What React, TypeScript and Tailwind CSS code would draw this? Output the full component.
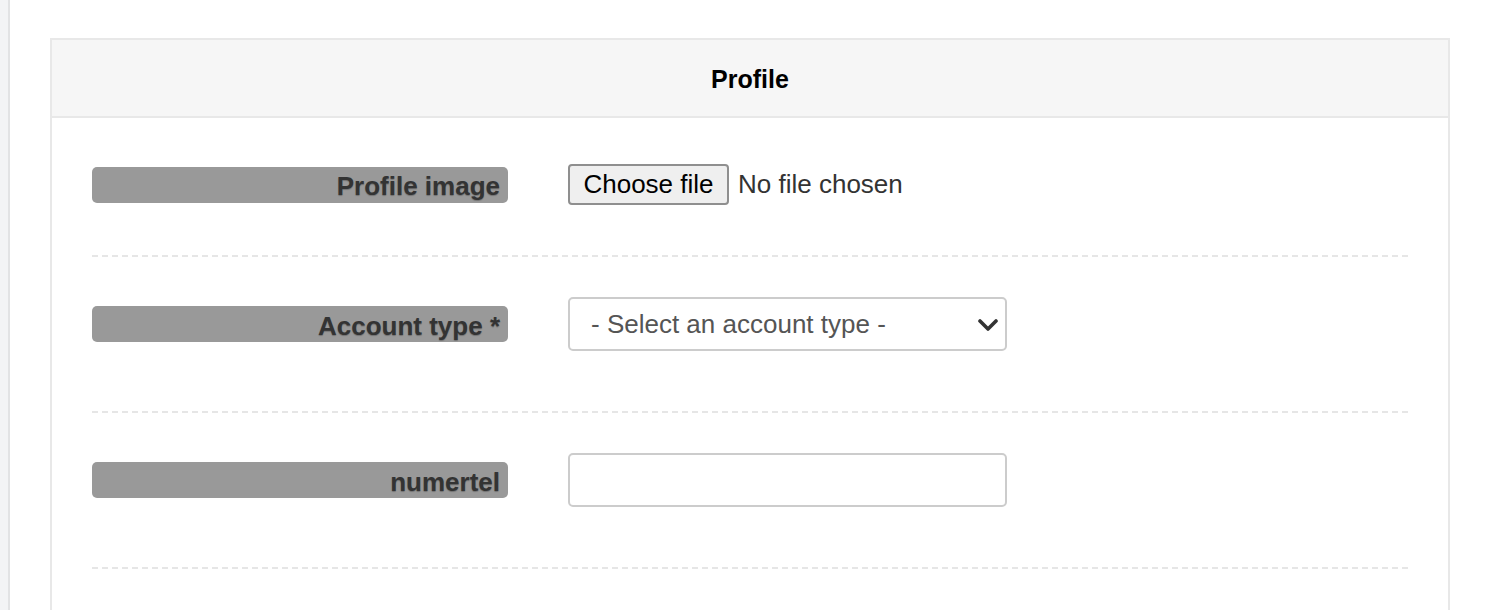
const rows = [
  { label: "Profile image", kind: "file" },
  { label: "Account type *", kind: "select" },
  { label: "numertel", kind: "text" },
];

function Label({ text }: { text: string }) {
  return (
    <div className="w-[416px] h-[36px] shrink-0 rounded-[5px] bg-[#999999] flex items-center justify-end pr-[8px]">
      <span className="text-[26px] font-bold text-[#333333] leading-none [text-shadow:0_1px_1px_rgba(0,0,0,0.25)] pt-[3px]">
        {text}
      </span>
    </div>
  );
}

function Field({ kind }: { kind: string }) {
  if (kind === "file") {
    return (
      <div className="flex items-center gap-[9px]">
        <div className="h-[41px] w-[161px] flex items-center justify-center rounded-[4px] border-2 border-[#8f8f8f] bg-[#efefef] text-[26px] text-black">
          Choose file
        </div>
        <span className="text-[26px] text-[#333333]">No file chosen</span>
      </div>
    );
  }
  if (kind === "select") {
    return (
      <div className="h-[54px] w-[439px] rounded-[5px] border-2 border-[#cccccc] bg-white flex items-center justify-between pl-[21px] pr-[7px]">
        <span className="text-[26px] text-[#555555]">- Select an account type -</span>
        <svg width="20" height="12" viewBox="0 0 20 12" className="mt-[1px]">
          <path d="M2 2 L10 10 L18 2" fill="none" stroke="#333333" strokeWidth="3.6" strokeLinecap="round" strokeLinejoin="round" />
        </svg>
      </div>
    );
  }
  return <div className="h-[54px] w-[439px] rounded-[5px] border-2 border-[#cccccc] bg-white" />;
}

export default function App() {
  return (
    <div className="h-[610px] w-[1490px] flex bg-white overflow-hidden font-['Liberation_Sans',Arial,sans-serif]">
      <div className="w-[8px] shrink-0 bg-[#f3f4f5] border-r-2 border-[#e2e3e4] box-content" />
      <div className="flex-1 pt-[38px] pl-[40px] pr-[40px]">
        <div className="border-2 border-[#e8e8e8] border-b-0">
          <div className="h-[78px] bg-[#f6f6f6] border-b-2 border-[#e8e8e8] flex items-center justify-center">
            <h2 className="text-[25px] font-bold text-black pt-[3px]">Profile</h2>
          </div>
          <div className="px-[40px] h-[600px]">
            {rows.map((row, i) => (
              <div
                key={i}
                className={`flex items-center gap-[60px] border-b-2 border-dashed border-[#e6e6e6] ${
                  i === 0 ? "pt-[46px] pb-[50px]" : "pt-[40px] pb-[60px]"
                }`}
              >
                <Label text={row.label} />
                <Field kind={row.kind} />
              </div>
            ))}
          </div>
        </div>
      </div>
    </div>
  );
}
